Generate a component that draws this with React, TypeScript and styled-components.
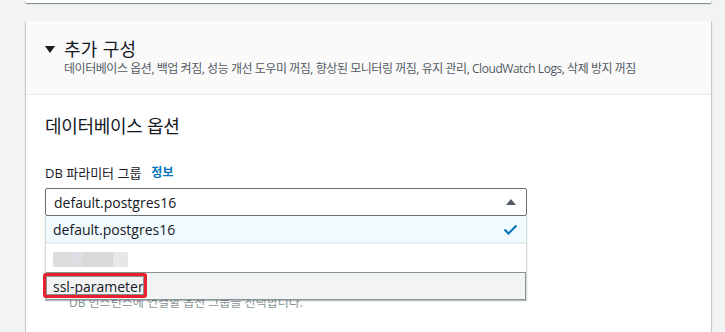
import styled, { createGlobalStyle } from "styled-components";

const GlobalStyle = createGlobalStyle`
  body {
    margin: 0;
    background: #f2f3f3;
    font-family: "Open Sans", "Noto Sans CJK KR", sans-serif;
    color: #16191f;
  }
`;

const Page = styled.div`
  width: 725px;
  height: 332px;
  overflow: hidden;
  padding: 0 14px 0 26px;
  box-sizing: border-box;
`;

const PrevCard = styled.div`
  height: 3px;
  background: #fff;
  box-shadow: 0 1px 1px 0 rgba(0, 28, 36, 0.3),
    1px 1px 1px 0 rgba(0, 28, 36, 0.15), -1px 1px 1px 0 rgba(0, 28, 36, 0.15);
  margin-bottom: 18px;
`;

const Card = styled.section`
  background: #fff;
  box-shadow: 0 1px 1px 0 rgba(0, 28, 36, 0.3),
    1px 1px 1px 0 rgba(0, 28, 36, 0.15), -1px 1px 1px 0 rgba(0, 28, 36, 0.15);
  height: 400px;
`;

const Header = styled.header`
  background: #fafafa;
  border-bottom: 1px solid #eaeded;
  padding: 16px 20px 18px 19px;
`;

const TitleRow = styled.div`
  display: flex;
  align-items: center;
  gap: 9px;
`;

const Caret = styled.span`
  width: 0;
  height: 0;
  border-left: 5px solid transparent;
  border-right: 5px solid transparent;
  border-top: 7px solid #16191f;
`;

const Title = styled.h2`
  margin: 0;
  font-size: 18px;
  line-height: 24px;
  font-weight: 400;
  letter-spacing: 0.3px;
`;

const Subtitle = styled.p`
  margin: 0 0 0 19px;
  font-size: 12px;
  line-height: 15px;
  color: #545b64;
  letter-spacing: -0.45px;
`;

const Body = styled.div`
  padding: 19px 19px 0;
`;

const SectionTitle = styled.h3`
  margin: 0 0 25px;
  font-size: 18px;
  line-height: 24px;
  font-weight: 400;
  letter-spacing: -0.3px;
`;

const Label = styled.div`
  display: flex;
  align-items: center;
  gap: 10px;
  font-size: 13px;
  line-height: 20px;
  margin-bottom: 5px;
`;

const InfoLink = styled.a`
  color: #0073bb;
  font-size: 12px;
  font-weight: 700;
  text-decoration: none;
`;

const SelectWrap = styled.div`
  position: relative;
  width: 482px;
`;

const Trigger = styled.div`
  display: flex;
  align-items: center;
  justify-content: space-between;
  height: 26px;
  border: 1px solid #687078;
  border-radius: 2px;
  padding: 0 10px 0 8px;
  font-size: 14px;
  background: #fff;
`;

const UpCaret = styled.span`
  width: 0;
  height: 0;
  border-left: 5px solid transparent;
  border-right: 5px solid transparent;
  border-bottom: 6px solid #545b64;
`;

const Menu = styled.ul`
  position: absolute;
  top: 100%;
  left: 0;
  width: 482px;
  margin: 0;
  padding: 0;
  list-style: none;
  background: #fff;
  border-left: 1px solid #d5dbdb;
  border-right: 1px solid #d5dbdb;
  box-sizing: border-box;
  box-shadow: 0 1px 1px rgba(0, 28, 36, 0.3);
  z-index: 2;
`;

const Option = styled.li<{ $variant?: "selected" | "hover" }>`
  position: relative;
  display: flex;
  align-items: center;
  justify-content: space-between;
  height: 28px;
  padding: 0 8px 0 7px;
  font-size: 14px;
  box-sizing: border-box;
  background: ${(p) =>
    p.$variant === "selected"
      ? "#f1faff"
      : p.$variant === "hover"
      ? "#f2f3f3"
      : "#fff"};
  border-bottom: ${(p) =>
    p.$variant === "selected" ? "2px solid #eaeded" : "none"};
  outline: ${(p) => (p.$variant === "hover" ? "1px solid #879596" : "none")};
  outline-offset: -1px;
`;

const Blurred = styled.div`
  display: flex;
  margin-top: 2px;
  span {
    height: 15px;
    filter: blur(0.5px);
  }
`;

const Highlight = styled.span`
  position: absolute;
  left: -3px;
  top: 1px;
  width: 98px;
  height: 19px;
  border: 3px solid #e8212e;
  border-radius: 3px;
  box-shadow: inset 0 0 0 1px #8a9091;
`;

const Hint = styled.p`
  margin: 79px 0 0;
  font-size: 12px;
  line-height: 16px;
  color: #879596;
  padding-left: 24px;
`;

function Check() {
  return (
    <svg width="15" height="11" viewBox="0 0 15 11" fill="none">
      <path
        d="M1.5 5.5 L5.5 9.5 L13.5 1.5"
        stroke="#0073bb"
        strokeWidth="2"
      />
    </svg>
  );
}

export default function App() {
  return (
    <>
      <GlobalStyle />
      <Page>
        <PrevCard />
        <Card>
          <Header>
            <TitleRow>
              <Caret />
              <Title>추가 구성</Title>
            </TitleRow>
            <Subtitle>
              데이터베이스 옵션, 백업 켜짐, 성능 개선 도우미 꺼짐, 향상된
              모니터링 꺼짐, 유지 관리, CloudWatch Logs, 삭제 방지 꺼짐
            </Subtitle>
          </Header>
          <Body>
            <SectionTitle>데이터베이스 옵션</SectionTitle>
            <Label>
              DB 파라미터 그룹 <InfoLink href="#">정보</InfoLink>
            </Label>
            <SelectWrap>
              <Trigger>
                default.postgres16
                <UpCaret />
              </Trigger>
              <Menu>
                <Option $variant="selected">
                  default.postgres16
                  <Check />
                </Option>
                <Option>
                  <Blurred>
                    <span style={{ width: 16, background: "#dedcdc" }} />
                    <span style={{ width: 14, background: "#dcdee4" }} />
                    <span style={{ width: 30, background: "#d9d9d9" }} />
                    <span style={{ width: 15, background: "#e6e7e9" }} />
                  </Blurred>
                </Option>
                <Option $variant="hover">
                  ssl-parameter
                  <Highlight />
                </Option>
              </Menu>
            </SelectWrap>
            <Hint>DB 인스턴스에 연결할 옵션 그룹을 선택합니다.</Hint>
          </Body>
        </Card>
      </Page>
    </>
  );
}
